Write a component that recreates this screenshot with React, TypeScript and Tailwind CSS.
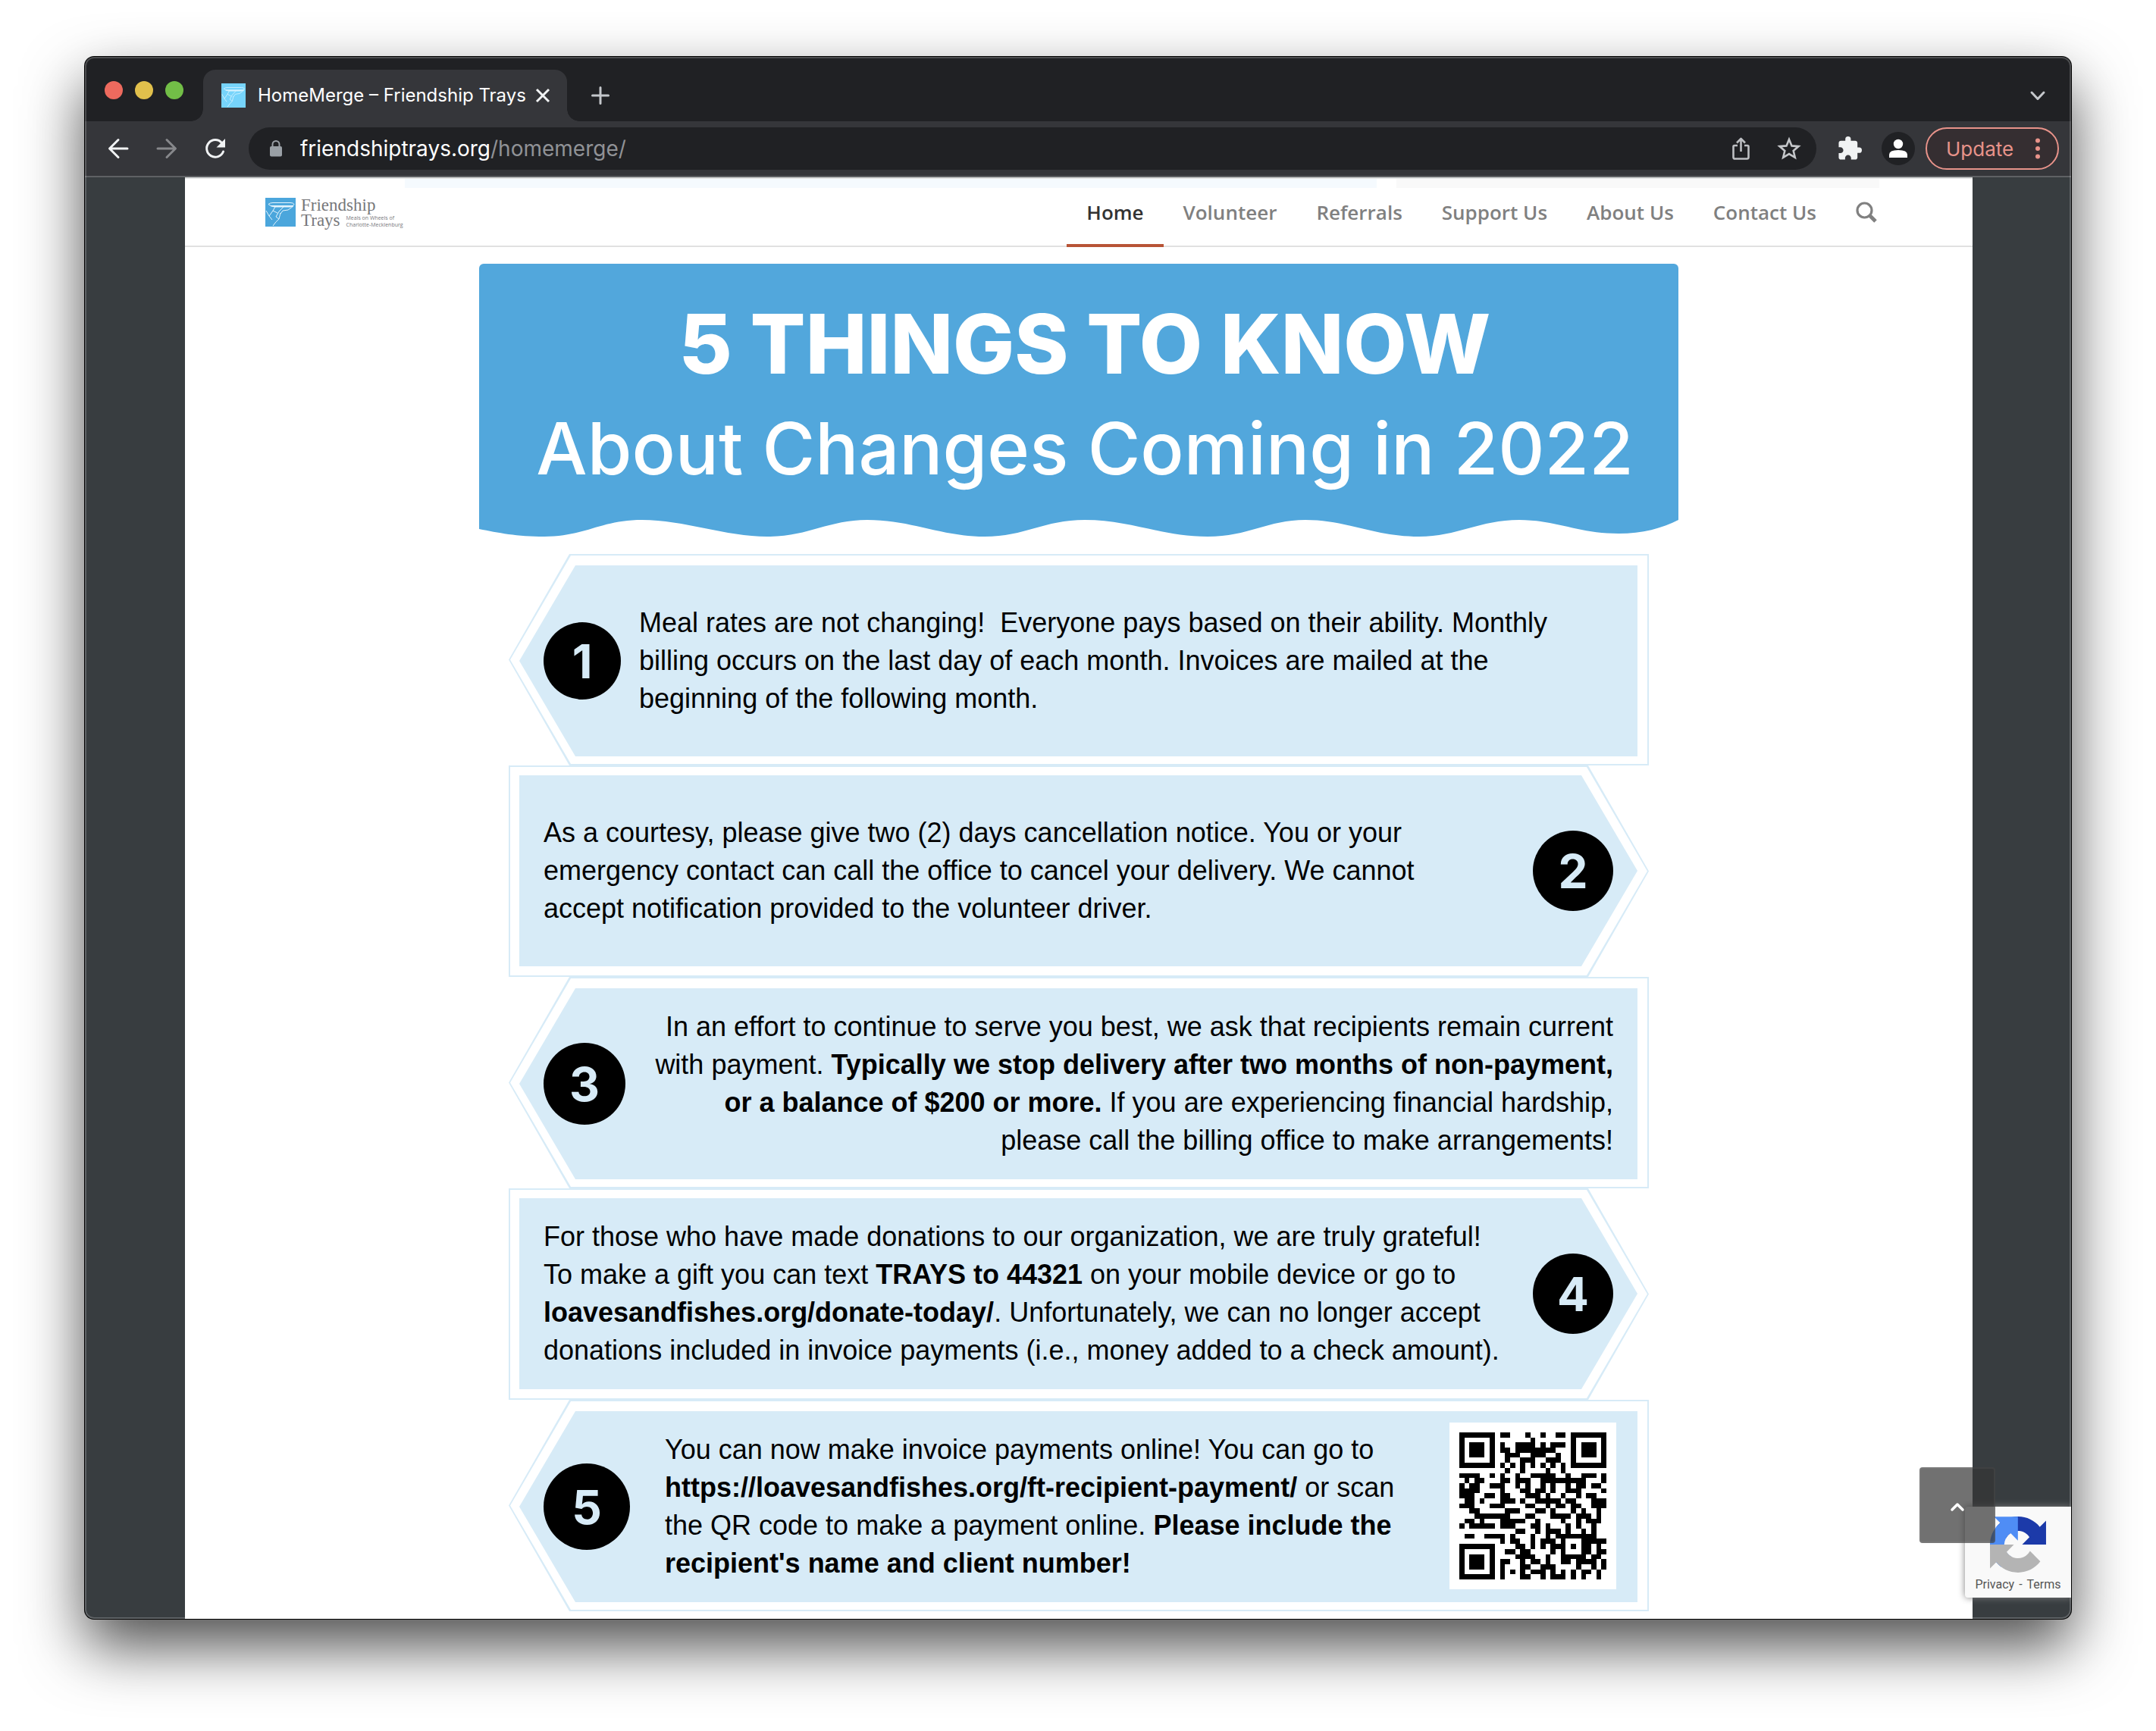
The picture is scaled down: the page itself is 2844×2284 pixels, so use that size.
import type { ReactNode } from "react";

const QR: number[][] = [
  [8, 9, 13, 16, 19, 20],
  [14],
  [8, 11, 12, 13, 14, 16, 18, 19, 20],
  [8, 9, 11, 12, 13, 14, 15, 16, 17, 18],
  [9, 10, 11, 14, 15, 16, 19],
  [9, 12, 13, 14, 17, 18, 19],
  [8, 10, 12, 14, 16, 18, 20],
  [9, 12, 17, 20],
  [0, 1, 2, 3, 6, 8, 11, 14, 15, 16, 17, 18, 21, 24, 25, 26, 28],
  [1, 3, 4, 8, 9, 11, 12, 13, 16, 17, 18, 19, 20, 21, 22, 23, 24, 28],
  [0, 2, 3, 6, 7, 8, 11, 13, 16, 18, 21, 23, 24, 26, 27],
  [0, 1, 2, 3, 8, 12, 13, 15, 16, 18, 21, 22, 23, 28],
  [0, 1, 2, 5, 6, 8, 9, 13, 14, 15, 17, 20, 23, 25, 26],
  [1, 2, 4, 8, 9, 10, 12, 15, 16, 17, 18, 19, 21, 22, 26, 27, 28],
  [0, 1, 2, 6, 7, 8, 13, 14, 17, 19, 20, 22, 23, 26, 27, 28],
  [2, 3, 9, 10, 11, 15, 16, 18, 22, 24, 27],
  [3, 4, 5, 6, 7, 8, 9, 13, 14, 18, 19, 20, 21, 23, 24, 25, 27],
  [1, 2, 4, 8, 9, 10, 11, 12, 15, 20, 23, 25, 26, 27],
  [0, 2, 3, 4, 5, 6, 8, 9, 10, 14, 15, 17, 21, 23, 26],
  [11, 12, 15, 17, 18, 19, 21, 24, 26],
  [1, 2, 5, 6, 7, 8, 10, 14, 17, 19, 20, 21, 22, 23, 24, 25, 26],
  [8, 10, 11, 14, 16, 17, 18, 20, 24, 25, 26, 27, 28],
  [11, 12, 14, 16, 18, 19, 20, 22, 24, 25, 27],
  [9, 10, 12, 13, 18, 20, 24, 25, 27, 28],
  [11, 12, 13, 14, 17, 20, 21, 22, 23, 24, 26, 27],
  [8, 9, 12, 14, 15, 17, 20, 21, 23, 24, 25, 26, 28],
  [8, 12, 13, 16, 17, 18, 23, 26, 28],
  [8, 10, 12, 14, 15, 16, 18, 20, 22, 24, 25, 27],
  [8, 12, 13, 16, 18, 19, 20, 22, 24, 27],
];

function QrCode() {
  return (
    <svg viewBox="0 0 29 29" className="size-[194px]" shapeRendering="crispEdges" role="img" aria-label="Payment QR code">
      {[[0, 0], [22, 0], [0, 22]].map(([x, y]) => (
        <g key={`${x}-${y}`}>
          <rect x={x} y={y} width="7" height="7" />
          <rect x={x + 1} y={y + 1} width="5" height="5" fill="#fff" />
          <rect x={x + 2} y={y + 2} width="3" height="3" />
        </g>
      ))}
      {QR.map((cols, y) => cols.map((x) => <rect key={`${x}-${y}`} x={x} y={y} width="1" height="1" />))}
    </svg>
  );
}

function TrayMark({ color, line, className }: { color: string; line: string; className: string }) {
  return (
    <svg viewBox="0 0 40 38" preserveAspectRatio="none" className={className} aria-hidden="true">
      <rect width="40" height="38" fill={color} />
      <g fill="none" stroke={line} strokeWidth="1" strokeLinejoin="round">
        <path d="M4 8.5Q6 6.5 10 6.5H33Q37 6.500 38 8.500L36 11H8Z" />
        <path d="M7 10.500H37L33 12H12Z" fill={line} />
        <path d="M37 11L30 16L23 17L20 21M13 12L10 17L5 24L1 17M10 17L16 20M5 24L9 29M24 12L18 18L14 25L18 28Q14 31 10 37M20 20L18 28" />
      </g>
    </svg>
  );
}

const nav = ["Home", "Volunteer", "Referrals", "Support Us", "About Us", "Contact Us"];

function BrowserChrome() {
  return (
    <header className="text-white">
      <div className="flex h-[85px] items-end bg-[#202124]">
        <div className="flex items-center gap-4 self-stretch pt-[2px] pr-[26px] pl-[26px]">
          <button aria-label="Close window" className="size-6 rounded-full bg-[#ed6a5e]" />
          <button aria-label="Minimize window" className="size-6 rounded-full bg-[#e1c04c]" />
          <button aria-label="Zoom window" className="size-6 rounded-full bg-[#72be47]" />
        </div>
        <div className="relative flex h-[68px] w-[480px] items-center rounded-t-[16px] bg-[#35363a] pl-6">
          <span className="absolute bottom-0 -left-4 size-4 bg-[radial-gradient(circle_at_0_0,#202124_15.500px,#35363a_16px)]" />
          <span className="absolute -right-4 bottom-0 size-4 bg-[radial-gradient(circle_at_100%_0,#202124_15.500px,#35363a_16px)]" />
          <TrayMark color="#76d4fb" line="#d6f3ff" className="size-8" />
          <span className="ml-4 w-[352px] text-[24px] whitespace-nowrap">HomeMerge – Friendship Trays</span>
          <button aria-label="Close tab" className="ml-3">
            <svg viewBox="0 0 24 24" className="size-6" fill="none" stroke="#f1f3f4" strokeWidth="3">
              <path d="M4 4L20 20M20 4L4 20" />
            </svg>
          </button>
        </div>
        <button aria-label="New tab" className="ml-8 flex h-[68px] items-center">
          <svg viewBox="0 0 24 24" className="size-6" fill="none" stroke="#c4c7cb" strokeWidth="3" strokeLinecap="round">
            <path d="M12 1.500V22.500M1.500 12H22.500" />
          </svg>
        </button>
        <button aria-label="Search tabs" className="mr-8 ml-auto flex h-[68px] items-center">
          <svg viewBox="0 0 24 24" className="size-6" fill="none" stroke="#c4c7cb" strokeWidth="3" strokeLinecap="round" strokeLinejoin="round">
            <path d="M4 8L12 16.500L20 8" />
          </svg>
        </button>
      </div>
      <div className="flex h-[74px] items-center border-b-2 border-[#5f6164] bg-[#35363a] pr-4 pl-7">
        <button aria-label="Back">
          <svg viewBox="0 0 32 32" className="size-8" fill="none" stroke="#f1f3f4" strokeWidth="3" strokeLinecap="round" strokeLinejoin="round">
            <path d="M28 16H5M16 4.500L4.500 16L16 27.500" />
          </svg>
        </button>
        <button aria-label="Forward" className="ml-8">
          <svg viewBox="0 0 32 32" className="size-8" fill="none" stroke="#87888b" strokeWidth="3" strokeLinecap="round" strokeLinejoin="round">
            <path d="M4 16H27M16 4.500L27.500 16L16 27.500" />
          </svg>
        </button>
        <button aria-label="Reload" className="ml-8">
          <svg viewBox="0 0 32 32" className="size-8" fill="none" stroke="#f1f3f4" strokeWidth="3" strokeLinecap="round">
            <path d="M26.500 20A11.300 11.300 0 1 1 24.500 8.500" />
            <path d="M29 3V14.500H17.500Z" fill="#f1f3f4" stroke="none" />
          </svg>
        </button>
        <div className="ml-7 flex h-14 flex-1 items-center rounded-full bg-[#202124] pr-5 pl-6">
          <svg viewBox="0 0 24 24" className="size-6" fill="none">
            <rect x="4" y="9" width="16" height="13.500" rx="2" fill="#9aa0a6" />
            <path d="M7.500 10V6.500A4.500 4.500 0 0 1 16.500 6.500V10" stroke="#9aa0a6" strokeWidth="2" />
          </svg>
          <span className="ml-5 text-[28px] text-[#909296]">
            <span className="text-white">friendshiptrays.org</span>/homemerge/
          </span>
          <button aria-label="Share" className="ml-auto">
            <svg viewBox="0 0 32 32" className="size-8" fill="none" stroke="#bdbfc2" strokeWidth="2.600" strokeLinejoin="round">
              <path d="M12 12H8Q6.500 12 6.500 13.500V27.500Q6.500 29.500 8.500 29.500H24.500Q26.500 29.500 26.500 27.500V13.500Q26.500 12 25 12H21M16.500 20V4M11 8.500L16.500 3L22 8.500" />
            </svg>
          </button>
          <button aria-label="Bookmark" className="ml-8">
            <svg viewBox="0 0 32 32" className="size-8" fill="none" stroke="#c4c6c9" strokeWidth="2.600">
              <path d="M16 4L19.500 12.400L28.500 13.100L21.700 19L23.800 27.800L16 23.100L8.200 27.800L10.300 19L3.500 13.100L12.500 12.400Z" />
            </svg>
          </button>
        </div>
        <button aria-label="Extensions" className="ml-7">
          <svg viewBox="1 1 22 22" className="size-8" fill="#f1f3f4">
            <path d="M20.500 11H19V7c0-1.100-.9-2-2-2h-4V3.500a2.500 2.500 0 0 0-5 0V5H4c-1.100 0-2 .9-2 2v3.800h1.500c1.500 0 2.700 1.200 2.700 2.700S5 16.200 3.500 16.200H2V20c0 1.100.9 2 2 2h3.800v-1.500c0-1.500 1.200-2.700 2.700-2.700s2.700 1.200 2.700 2.700V22H17c1.100 0 2-.9 2-2v-4h1.500a2.500 2.500 0 0 0 0-5z" />
          </svg>
        </button>
        <button aria-label="Profile" className="ml-[26px]">
          <svg viewBox="0 0 44 44" className="size-11" fill="#fff">
            <circle cx="22" cy="22" r="22" fill="#202124" />
            <circle cx="22" cy="16" r="6.200" />
            <path d="M10 34V30Q10 24 22 24Q34 24 34 30V34Z" />
          </svg>
        </button>
        <button className="ml-[14px] flex h-14 w-[176px] items-center rounded-full border-2 border-[#e8938a] bg-[#352e31] pr-[14px] pl-[25px] text-[26px] text-[#e8938a]">
          Update
          <svg viewBox="0 0 24 32" className="ml-auto h-8 w-6" fill="#e8938a">
            <circle cx="12" cy="5.500" r="3" />
            <circle cx="12" cy="16" r="3" />
            <circle cx="12" cy="26.500" r="3" />
          </svg>
        </button>
      </div>
    </header>
  );
}

function SiteHeader() {
  return (
    <header>
      <div className="flex h-[14px] border-t-2 border-[#e0e1e1] pl-[290px]">
        <div className="w-[1282px] bg-[#f5fafe]" />
        <div className="ml-[26px] w-[637px] bg-[#f9f9f9]" />
      </div>
      <div className="flex h-[78px] justify-between border-b-2 border-[#e1e1e1] pr-[126px] pl-[106px]">
        <a href="#home" className="mt-[13px] flex h-10 items-start text-[#77787b]">
          <TrayMark color="#4ba6dc" line="#e4f4fd" className="h-[38px] w-10" />
          <span className="ml-[7px] block font-['Liberation_Serif',serif] text-[23px] leading-[20px]">
            <span className="block">Friendship</span>
            <span className="flex items-start">
              Trays
              <span className="ml-2 pt-[2px] font-['Open_Sans',sans-serif] text-[7px] leading-[9px] whitespace-nowrap">
                Meals on Wheels of
                <br />
                Charlotte-Mecklenburg
              </span>
            </span>
          </span>
        </a>
        <nav className="-mb-[2px] flex font-['Open_Sans',sans-serif] text-[26px] font-semibold">
          {nav.map((item) => (
            <a
              key={item}
              href="#nav"
              className={
                item === "Home"
                  ? "flex items-center border-b-4 border-[#b85436] px-[26px] pb-[10px] text-[#333]"
                  : "flex items-center border-b-4 border-transparent px-[26px] pb-[10px] text-[#808080]"
              }
            >
              {item}
            </a>
          ))}
          <button aria-label="Search" className="ml-[26px] pb-[14px]">
            <svg viewBox="0 0 28 28" className="size-7" fill="none" stroke="#808080">
              <circle cx="11.500" cy="11.500" r="9.500" strokeWidth="3.200" />
              <path d="M18.500 18.500L26 26" strokeWidth="5" />
            </svg>
          </button>
        </nav>
      </div>
    </header>
  );
}

function Panel({ side, children }: { side: "left" | "right"; children: ReactNode }) {
  if (side === "left") {
    return (
      <li className="h-[279px] bg-[#d7ebf7] p-[2px] [clip-path:polygon(80px_0,100%_0,100%_100%,80px_100%,0_50%)]">
        <div className="h-full bg-white pt-[13px] pr-[13px] pl-[12px] [clip-path:polygon(80px_0,100%_0,100%_100%,80px_100%,0_50%)]">
          <div className="flex h-[252px] items-center bg-[#d7ebf7] pr-[32px] pl-[32px] [clip-path:polygon(74px_0,100%_0,100%_100%,74px_100%,0_50%)]">
            {children}
          </div>
        </div>
      </li>
    );
  }
  return (
    <li className="h-[279px] bg-[#d7ebf7] p-[2px] [clip-path:polygon(0_0,calc(100%_-_80px)_0,100%_50%,calc(100%_-_80px)_100%,0_100%)]">
      <div className="h-full bg-white pt-[11px] pr-[13px] pl-[12px] [clip-path:polygon(0_0,calc(100%_-_80px)_0,100%_50%,calc(100%_-_80px)_100%,0_100%)]">
        <div className="flex h-[252px] items-center justify-between bg-[#d7ebf7] pr-[32px] pl-[32px] [clip-path:polygon(0_0,calc(100%_-_74px)_0,100%_50%,calc(100%_-_74px)_100%,0_100%)]">
          {children}
        </div>
      </div>
    </li>
  );
}

const circle = "flex shrink-0 items-center justify-center rounded-full bg-black text-[62px] font-bold text-[#d7ebf7]";
const copy = "font-['Liberation_Sans',sans-serif] text-[36px] leading-[50px] whitespace-nowrap";

export default function App() {
  return (
    <div className="min-h-screen bg-white px-[112px] pt-[75px] pb-[147px] font-['Inter',sans-serif]">
      <div className="relative overflow-hidden rounded-[12px] bg-[#383d40] shadow-[0_0_0_1px_#000,0_36px_80px_rgba(0,0,0,0.7)]">
        <BrowserChrome />
        <main className="mr-[130px] ml-[132px] bg-white pb-[10px]">
          <SiteHeader />
          <div className="mx-auto mt-[22px] w-[1582px]">
            <div className="rounded-t-[6px] bg-[#52a7dc] pt-[42px] pl-4 text-center whitespace-nowrap text-white">
              <h1 className="text-[108px] leading-[128px] font-extrabold">5 THINGS TO KNOW</h1>
              <p className="h-[166px] text-[95px] leading-[148px] font-medium">About Changes Coming in 2022</p>
            </div>
            <svg viewBox="0 0 1582 26" className="-mt-px block w-full" fill="#52a7dc" aria-hidden="true">
              <path d="M0 0H1582V3C1560 14 1535 21 1503 21C1450 21 1420 3 1372 3C1320 3 1290 25 1240 25C1180 25 1145 3 1090 3C1040 3 1015 25 961 25C900 25 860 3 799 3C745 3 720 25 667 25C610 25 570 3 512 3C460 3 435 25 380 25C325 25 270 3 215 3C160 3 140 25 86 25C50 25 25 20 0 15Z" />
            </svg>
            <ol className="mx-[39px] mt-[22px]">
              <Panel side="left">
                <span className={`${circle} size-[102px]`}>1</span>
                <p className={`${copy} ml-[24px]`}>
                  Meal rates are not changing!&nbsp; Everyone pays based on their ability. Monthly
                  <br />
                  billing occurs on the last day of each month. Invoices are mailed at the
                  <br />
                  beginning of the following month.
                </p>
              </Panel>
              <Panel side="right">
                <p className={copy}>
                  As a courtesy, please give two (2) days cancellation notice. You or your
                  <br />
                  emergency contact can call the office to cancel your delivery. We cannot
                  <br />
                  accept notification provided to the volunteer driver.
                </p>
                <span className={`${circle} size-[106px]`}>2</span>
              </Panel>
              <Panel side="left">
                <span className={`${circle} size-[108px]`}>3</span>
                <p className={`${copy} ml-auto text-right`}>
                  In an effort to continue to serve you best, we ask that recipients remain current
                  <br />
                  with payment. <b>Typically we stop delivery after two months of non-payment,</b>
                  <br />
                  <b>or a balance of $200 or more.</b> If you are experiencing financial hardship,
                  <br />
                  please call the billing office to make arrangements!
                </p>
              </Panel>
              <Panel side="right">
                <p className={copy}>
                  For those who have made donations to our organization, we are truly grateful!
                  <br />
                  To make a gift you can text <b>TRAYS to 44321</b> on your mobile device or go to
                  <br />
                  <b>loavesandfishes.org/donate-today/</b>. Unfortunately, we can no longer accept
                  <br />
                  donations included in invoice payments (i.e., money added to a check amount).
                </p>
                <span className={`${circle} size-[106px]`}>4</span>
              </Panel>
              <Panel side="left">
                <span className={`${circle} size-[114px]`}>5</span>
                <p className={`${copy} ml-[46px]`}>
                  You can now make invoice payments online! You can go to
                  <br />
                  <b>https://loavesandfishes.org/ft-recipient-payment/</b> or scan
                  <br />
                  the QR code to make a payment online. <b>Please include the</b>
                  <br />
                  <b>recipient's name and client number!</b>
                </p>
                <div className="-mr-[4px] mb-[2px] ml-auto flex size-[220px] items-center justify-center bg-white">
                  <QrCode />
                </div>
              </Panel>
            </ol>
          </div>
        </main>
        <aside className="absolute right-0 bottom-[28px] flex h-[120px] w-[140px] flex-col items-center rounded-l-[4px] bg-[#f9f9f9] pt-[13px] shadow-[0_0_10px_gray]">
          <svg viewBox="0 0 64 64" className="size-[74px]" aria-hidden="true">
            <path fill="#1c3aa9" d="M64 31.955l-.033-1.370V4.687l-7.160 7.160C50.948 4.674 42.033.093 32.050.093c-10.400 0-19.622 4.960-25.458 12.640l11.736 11.860a15.550 15.550 0 0 1 4.754-5.334c2.050-1.600 4.952-2.906 8.968-2.906.485 0 .860.057 1.135.163 4.976.393 9.288 3.140 11.828 7.124l-8.307 8.307L64 31.953" />
            <path fill="#4f8df5" d="M31.862.094l-1.370.033H4.594l7.160 7.160C4.580 13.147 0 22.060 0 32.046c0 10.400 4.960 19.622 12.640 25.458L24.500 45.768a15.550 15.550 0 0 1-5.334-4.754c-1.600-2.050-2.906-4.952-2.906-8.968 0-.485.057-.860.163-1.135.393-4.976 3.140-9.288 7.124-11.828l8.307 8.307L31.860.095" />
            <path fill="#b4b4b4" d="M.001 32.045l.033 1.370v25.898l7.160-7.160c5.860 7.173 14.774 11.754 24.760 11.754 10.400 0 19.622-4.960 25.458-12.640l-11.736-11.860a15.550 15.550 0 0 1-4.754 5.334c-2.050 1.600-4.952 2.906-8.968 2.906-.485 0-.860-.057-1.135-.163-4.976-.393-9.288-3.140-11.828-7.124l8.307-8.307c-10.522.040-22.400.066-27.295-.005" />
          </svg>
          <div className="flex gap-[6px] font-['Roboto',sans-serif] text-[16px] leading-8 text-[#555]">
            <a href="#privacy">Privacy</a>
            <span>-</span>
            <a href="#terms">Terms</a>
          </div>
        </aside>
        <button
          aria-label="Back to top"
          className="absolute right-[100px] bottom-[100px] flex size-[100px] items-center justify-center rounded-[4px] border-2 border-white/5 bg-[#353535]/70"
        >
          <svg viewBox="0 0 24 24" className="mt-1 size-6" fill="none" stroke="#fff" strokeWidth="3.500" strokeLinecap="round" strokeLinejoin="round">
            <path d="M5 16L12 9L19 16" />
          </svg>
        </button>
        <div className="pointer-events-none absolute inset-0 rounded-[12px] border-2 border-white/20" />
      </div>
    </div>
  );
}
